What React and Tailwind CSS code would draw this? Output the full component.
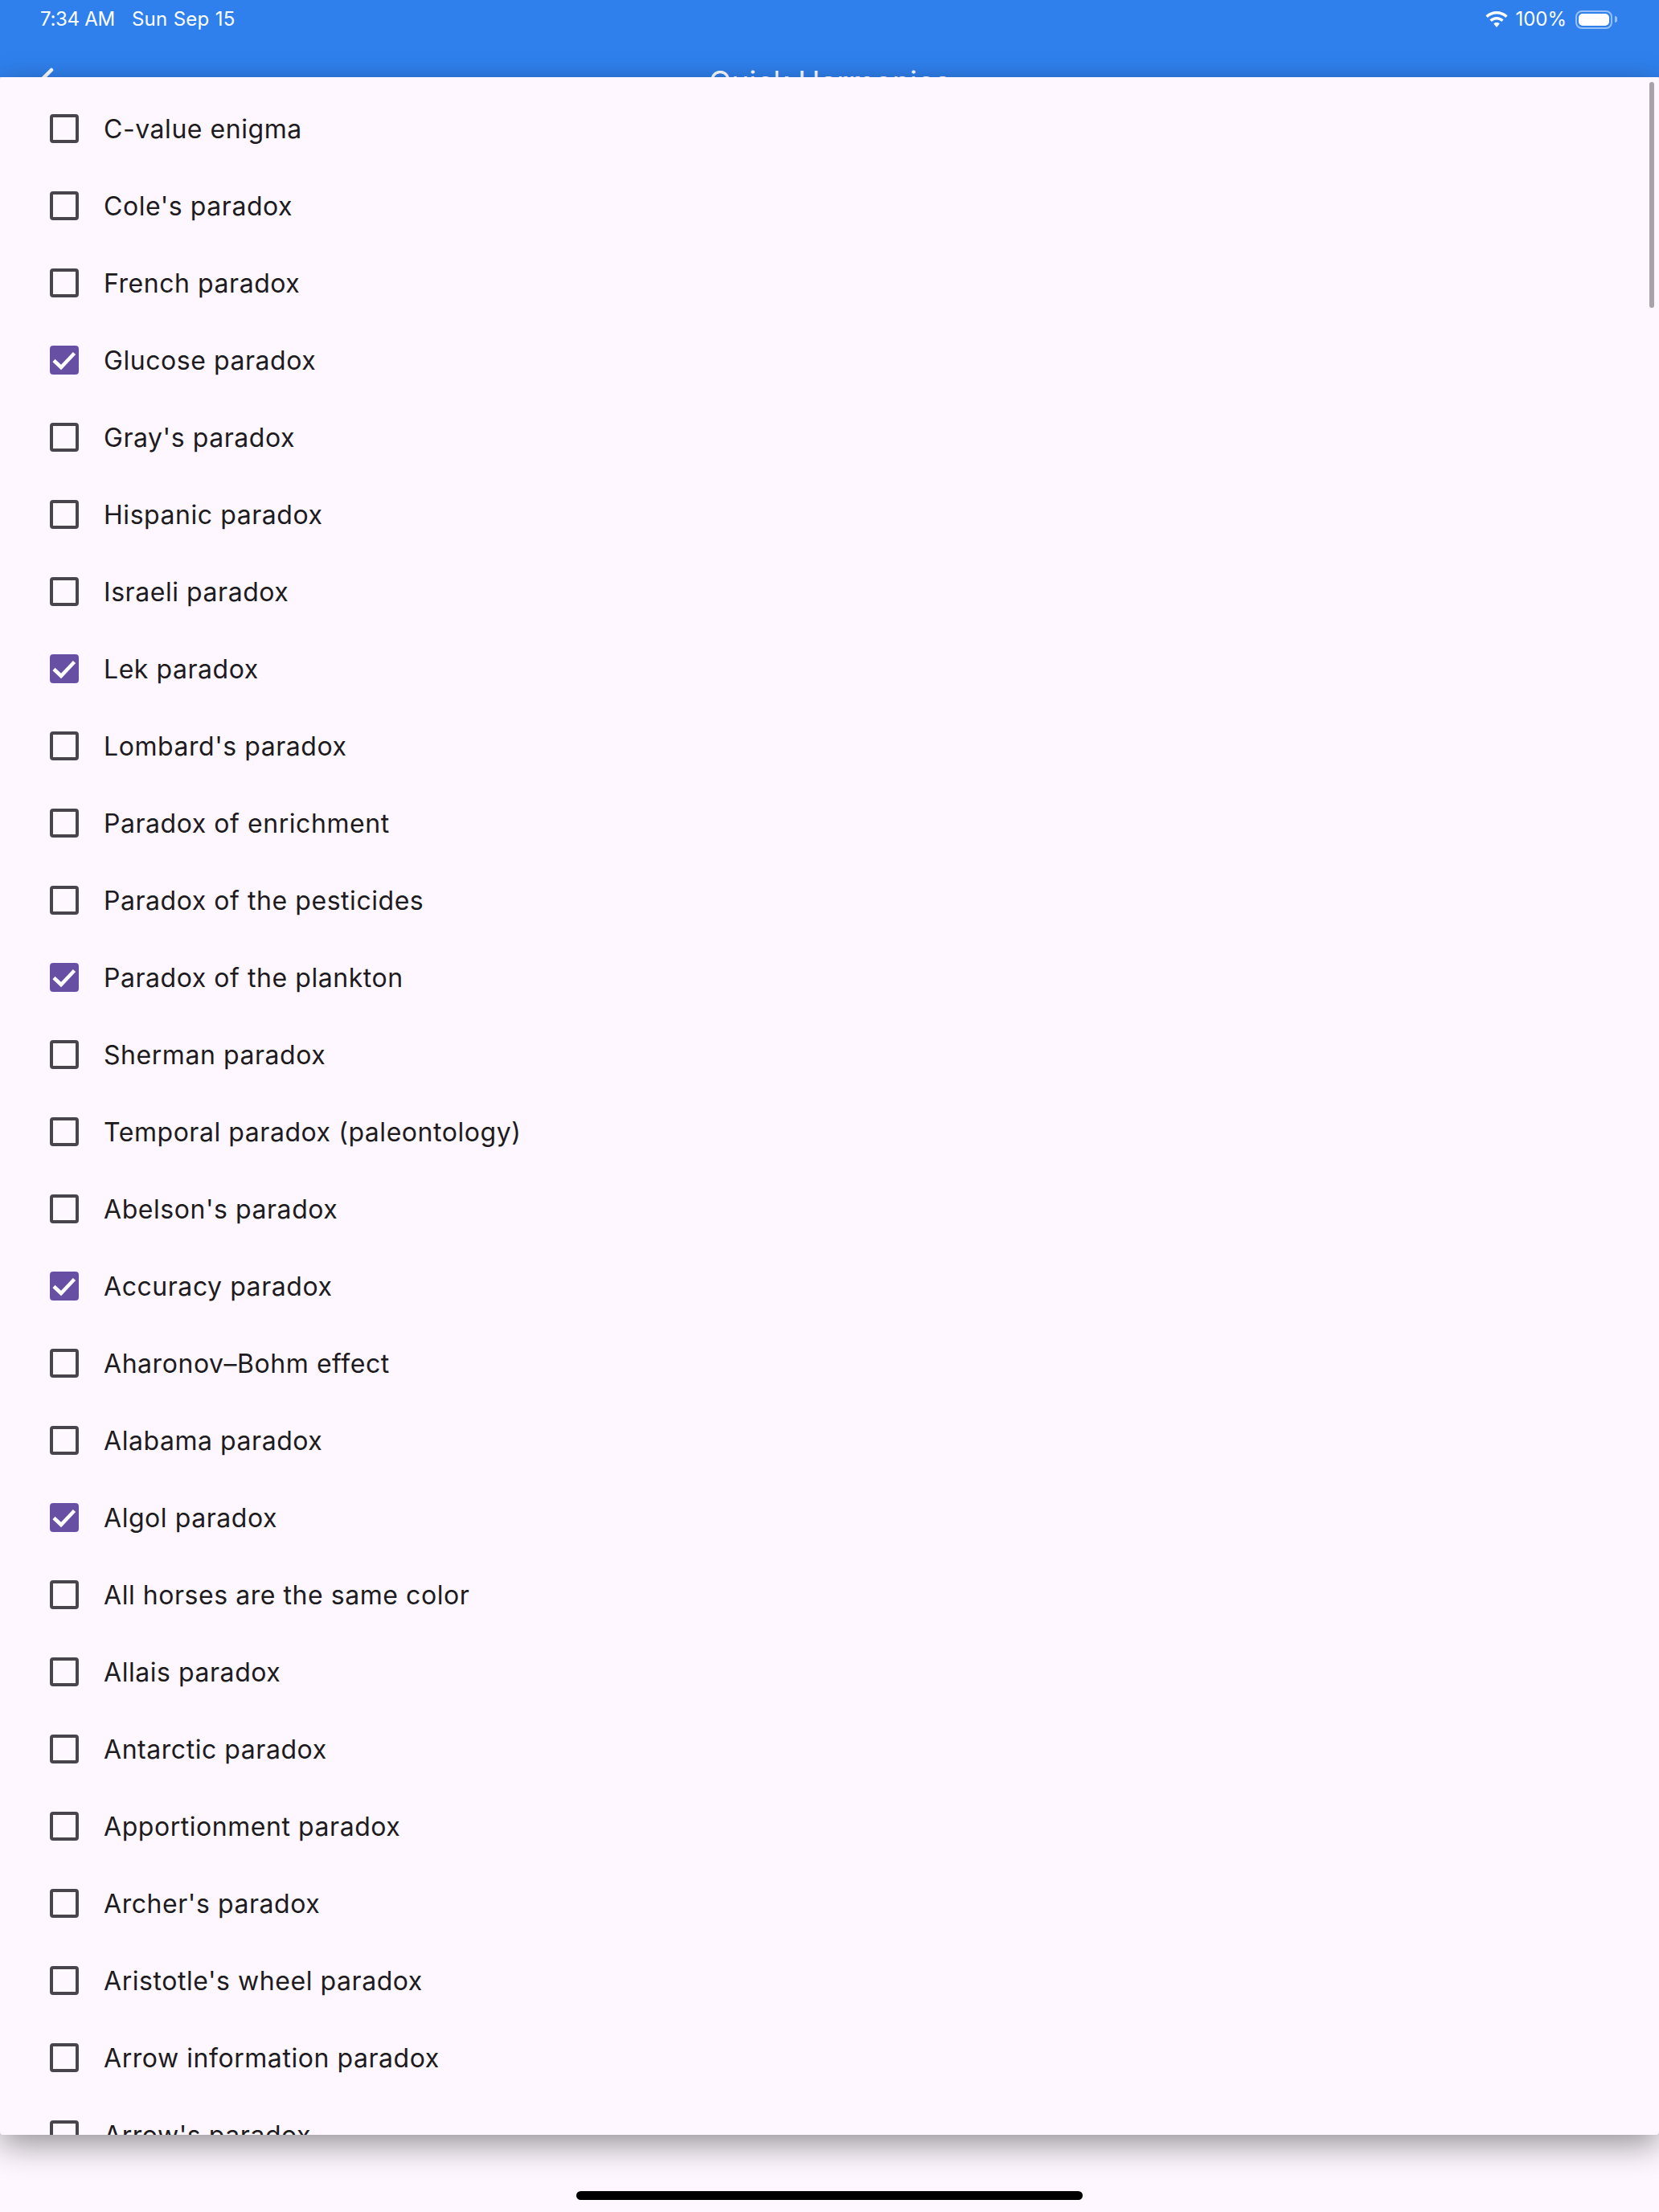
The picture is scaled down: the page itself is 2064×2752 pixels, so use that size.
const items = [
  ["C-value enigma", false],
  ["Cole's paradox", false],
  ["French paradox", false],
  ["Glucose paradox", true],
  ["Gray's paradox", false],
  ["Hispanic paradox", false],
  ["Israeli paradox", false],
  ["Lek paradox", true],
  ["Lombard's paradox", false],
  ["Paradox of enrichment", false],
  ["Paradox of the pesticides", false],
  ["Paradox of the plankton", true],
  ["Sherman paradox", false],
  ["Temporal paradox (paleontology)", false],
  ["Abelson's paradox", false],
  ["Accuracy paradox", true],
  ["Aharonov–Bohm effect", false],
  ["Alabama paradox", false],
  ["Algol paradox", true],
  ["All horses are the same color", false],
  ["Allais paradox", false],
  ["Antarctic paradox", false],
  ["Apportionment paradox", false],
  ["Archer's paradox", false],
  ["Aristotle's wheel paradox", false],
  ["Arrow information paradox", false],
  ["Arrow's paradox", false],
];

function Box({ checked }) {
  if (checked) {
    return (
      <div className="w-[36px] h-[36px] shrink-0 rounded-[4px] bg-[#6750a4]">
        <svg width="36" height="36" viewBox="0 0 36 36" fill="none">
          <path d="M5 18.5 L14 27 L30.5 9.5" stroke="#ffffff" strokeWidth="4.5" />
        </svg>
      </div>
    );
  }
  return <div className="w-[36px] h-[36px] shrink-0 rounded-[4px] border-[4px] border-[#49454f]" />;
}

export default function App() {
  return (
    <div className="w-[2064px] h-[2752px] flex flex-col overflow-hidden bg-[#fef7ff] font-['Inter',sans-serif]">
      <header className="h-[96px] shrink-0 overflow-hidden bg-[#2f80ed] text-white">
        <div className="h-[48px] flex items-center pl-[50px] pr-[52px] text-[24px]">
          <span className="tracking-[-0.3px]">7:34 AM</span>
          <span className="ml-[21px] tracking-[0.3px]">Sun Sep 15</span>
          <div className="ml-auto flex items-center">
            <svg width="28" height="20" viewBox="0 0 28 20" fill="white">
              <path d="M14 0C8.8 0 4 2 .4 5.4L2.8 8C5.8 5.2 9.7 3.5 14 3.5S22.2 5.2 25.2 8L27.6 5.4C24 2 19.2 0 14 0Z" />
              <path d="M14 7C10.7 7 7.7 8.3 5.4 10.4L7.8 13C9.4 11.5 11.6 10.5 14 10.5S18.6 11.5 20.2 13L22.6 10.4C20.3 8.3 17.3 7 14 7Z" />
              <path d="M14 14C12.6 14 11.3 14.5 10.3 15.4L14 20L17.7 15.4C16.7 14.5 15.4 14 14 14Z" />
            </svg>
            <span className="ml-[9px]">100%</span>
            <div className="ml-[11px] w-[46px] h-[23px] rounded-[8px] border-[2px] border-white/50 p-[2px]">
              <div className="w-full h-full rounded-[5px] bg-white" />
            </div>
            <div className="ml-[3px] w-[3px] h-[8px] rounded-r-[3px] bg-white/50" />
          </div>
        </div>
        <div className="relative h-[48px] flex items-start justify-center text-[37px] pt-[26px]">
          <svg className="absolute left-[36px] top-[29px]" width="40" height="40" viewBox="0 0 40 40" fill="none">
            <path d="M28 10 L16 22 L28 34" stroke="white" strokeWidth="4.5" strokeLinecap="round" />
          </svg>
          <span>Quick Harmonies</span>
        </div>
      </header>
      <main className="relative h-[2560px] shrink-0 overflow-hidden rounded-[4px] bg-[#fef7ff] shadow-[0_12px_40px_rgba(0,0,0,0.42)]">
        <ul className="pt-[16px]">
          {items.map(([label, checked]) => (
            <li key={label} className="h-[96px] flex items-center pl-[62px]">
              <Box checked={checked} />
              <span className="ml-[31px] pt-[1px] text-[32px] tracking-[0.55px] text-[#1d1b20]">{label}</span>
            </li>
          ))}
        </ul>
        <div className="absolute right-[6px] top-[6px] w-[6px] h-[281px] rounded-[3px] bg-[#a8a3a9]" />
      </main>
      <footer className="flex-1 flex justify-center pt-[70px]">
        <div className="w-[630px] h-[11px] rounded-full bg-black" />
      </footer>
    </div>
  );
}
